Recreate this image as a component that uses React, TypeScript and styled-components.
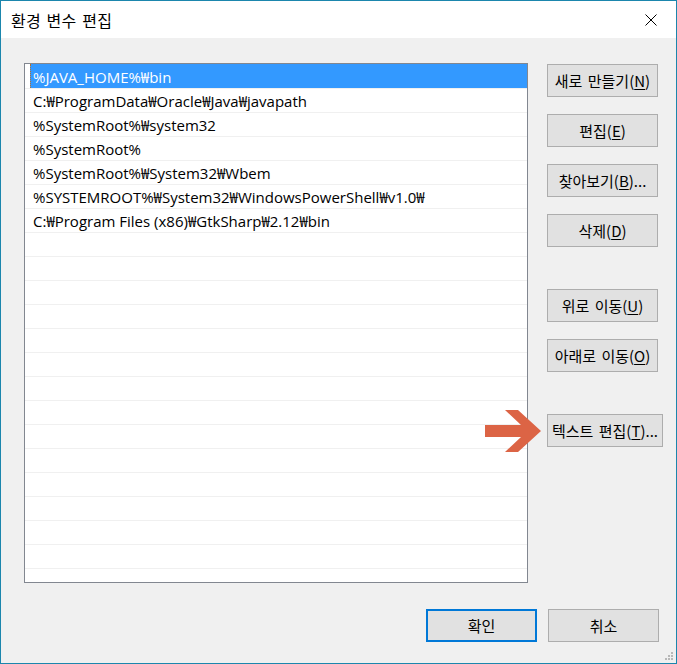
import React from "react";
import styled, { createGlobalStyle } from "styled-components";

const Global = createGlobalStyle`
  html, body { margin: 0; padding: 0; background: #ffffff; }
  * { box-sizing: border-box; }
`;

const FONT = `"Open Sans", "Noto Sans CJK KR", sans-serif`;
const KFONT = `"Noto Sans CJK KR", "Open Sans", sans-serif`;

const Window = styled.div`
  width: 677px;
  height: 664px;
  border: 1px solid #1b86ad;
  display: flex;
  flex-direction: column;
  background: #f0f0f0;
  font-family: ${KFONT};
  color: #000;
  position: relative;
`;

const TitleBar = styled.div`
  height: 37px;
  background: #ffffff;
  display: flex;
  align-items: center;
  justify-content: space-between;
  padding-left: 10px;
`;

const Title = styled.div`
  font-size: 16px;
  letter-spacing: 0.2px;
  word-spacing: 2px;
  white-space: pre;
`;

const CloseBox = styled.div`
  width: 46px;
  height: 37px;
  display: flex;
  align-items: center;
  justify-content: center;
  margin-right: 2px;
`;

const Body = styled.div`
  flex: 1;
  display: flex;
  flex-direction: column;
  padding: 25px 17px 0 23px;
  position: relative;
`;

const Main = styled.div`
  display: flex;
  gap: 19px;
`;

const ListBox = styled.div`
  flex: 0 0 504px;
  width: 504px;
  height: 520px;
  border: 1px solid #828790;
  background: #ffffff;
  overflow: hidden;
  font-family: ${FONT};
  font-size: 15px;
`;

const Row = styled.div<{ $selected?: boolean }>`
  height: 24px;
  display: flex;
  align-items: center;
  white-space: nowrap;
  &:not(:first-child) { border-top: 1px solid #f0f0f0; }
  ${(p) =>
    p.$selected
      ? `
    margin-left: 5px;
    padding-left: 2px;
    background: #3399ff;
    color: #ffffff;
    border-left: 1px dotted #b8702a;
  `
      : `
    padding-left: 8px;
    color: #000000;
  `}
`;

const ButtonColumn = styled.div`
  flex: 1;
  min-width: 0;
  display: flex;
  flex-direction: column;
  align-items: flex-start;
  padding-top: 1px;
`;

const Button = styled.button<{ $gap?: number; $primary?: boolean }>`
  position: relative;
  flex-shrink: 0;
  min-width: 111px;
  height: 33px;
  margin-top: ${(p) => p.$gap ?? 0}px;
  padding: 0 4px;
  background: #e1e1e1;
  border: ${(p) => (p.$primary ? "2px solid #0078d7" : "1px solid #adadad")};
  font-family: ${KFONT};
  font-size: 15px;
  letter-spacing: 0;
  word-spacing: 2px;
  color: #000;
  display: flex;
  align-items: center;
  justify-content: center;
  white-space: pre;
  cursor: default;
`;

const Key = styled.span`
  text-decoration: underline;
  text-underline-offset: 2px;
`;

const Arrow = styled.svg`
  position: absolute;
  right: calc(100% + 7px);
  top: -5px;
`;

const Footer = styled.div`
  display: flex;
  justify-content: flex-end;
  gap: 11px;
  margin-top: 26px;
`;

const Grip = styled.svg`
  position: absolute;
  right: 2px;
  bottom: 2px;
`;

const paths = [
  "%JAVA_HOME%₩bin",
  "C:₩ProgramData₩Oracle₩Java₩javapath",
  "%SystemRoot%₩system32",
  "%SystemRoot%",
  "%SystemRoot%₩System32₩Wbem",
  "%SYSTEMROOT%₩System32₩WindowsPowerShell₩v1.0₩",
  "C:₩Program Files (x86)₩GtkSharp₩2.12₩bin",
];

const rows = Array.from({ length: 22 }, (_, i) => paths[i] ?? "");

export default function App() {
  return (
    <>
      <Global />
      <Window>
        <TitleBar>
          <Title>환경 변수 편집</Title>
          <CloseBox>
            <svg width="12" height="12" viewBox="0 0 12 12">
              <path d="M0.5 0.5 L11.5 11.5 M11.5 0.5 L0.5 11.5" stroke="#000" strokeWidth="1" />
            </svg>
          </CloseBox>
        </TitleBar>
        <Body>
          <Main>
            <ListBox>
              {rows.map((t, i) => (
                <Row key={i} $selected={i === 0}>
                  {t}
                </Row>
              ))}
            </ListBox>
            <ButtonColumn>
              <Button>
                새로 만들기(<Key>N</Key>)
              </Button>
              <Button $gap={17}>
                편집(<Key>E</Key>)
              </Button>
              <Button $gap={17}>
                찾아보기(<Key>B</Key>)...
              </Button>
              <Button $gap={17}>
                삭제(<Key>D</Key>)
              </Button>
              <Button $gap={42}>
                위로 이동(<Key>U</Key>)
              </Button>
              <Button $gap={17}>
                아래로 이동(<Key>O</Key>)
              </Button>
              <Button $gap={42}>
                텍스트 편집(<Key>T</Key>)...
                <Arrow width="56" height="42" viewBox="0 0 56 42">
                  <polygon
                    points="0,15 36,15 20,0 33,0 56,21 33,42 20,42 36,27 0,27"
                    fill="#dc6445"
                  />
                </Arrow>
              </Button>
            </ButtonColumn>
          </Main>
          <Footer>
            <Button $primary>확인</Button>
            <Button>취소</Button>
          </Footer>
          <Grip width="9" height="9" viewBox="0 0 9 9">
            <g fill="#b8b8b8">
              <rect x="6" y="0" width="2" height="2" />
              <rect x="3" y="3" width="2" height="2" />
              <rect x="6" y="3" width="2" height="2" />
              <rect x="0" y="6" width="2" height="2" />
              <rect x="3" y="6" width="2" height="2" />
              <rect x="6" y="6" width="2" height="2" />
            </g>
          </Grip>
        </Body>
      </Window>
    </>
  );
}
